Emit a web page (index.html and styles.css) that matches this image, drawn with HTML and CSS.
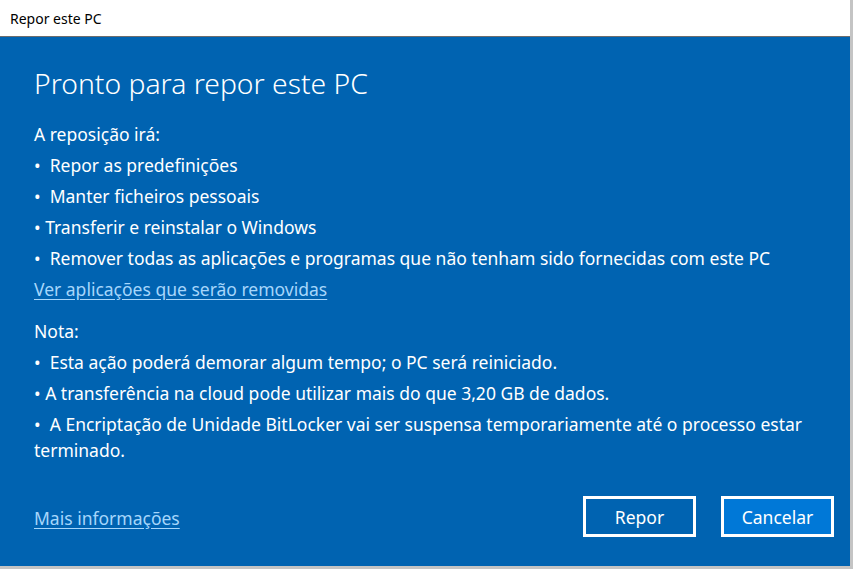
FILE: index.html
```html
<!DOCTYPE html>
<html lang="pt">
<head>
  <meta charset="UTF-8">
  <meta name="viewport" content="width=device-width, initial-scale=1.0">
  <title>Repor este PC</title>
  <link rel="stylesheet" href="styles.css">
</head>
<body>
  <div class="window">
    <div class="titlebar">Repor este PC</div>
    <div class="content">
      <h1>Pronto para repor este PC</h1>
      <p class="intro">A reposição irá:</p>
      <ul class="items">
        <li>•&nbsp; Repor as predefinições</li>
        <li>•&nbsp; Manter ficheiros pessoais</li>
        <li>• Transferir e reinstalar o Windows</li>
        <li>•&nbsp; Remover todas as aplicações e programas que não tenham sido fornecidas com este PC</li>
      </ul>
      <a class="link" href="#">Ver aplicações que serão removidas</a>
      <p class="intro note">Nota:</p>
      <ul class="items">
        <li>•&nbsp; Esta ação poderá demorar algum tempo; o PC será reiniciado.</li>
        <li>• A transferência na cloud pode utilizar mais do que 3,20 GB de dados.</li>
        <li>•&nbsp; A Encriptação de Unidade BitLocker vai ser suspensa temporariamente até o processo estar terminado.</li>
      </ul>
      <div class="footer">
        <a class="link more" href="#">Mais informações</a>
        <div class="buttons">
          <button class="btn">Repor</button>
          <button class="btn primary">Cancelar</button>
        </div>
      </div>
    </div>
  </div>
</body>
</html>
```

FILE: styles.css
```css
* {
  margin: 0;
  padding: 0;
  box-sizing: border-box;
}

body {
  font-family: 'Noto Sans', 'Open Sans', sans-serif;
  background-color: #c4c4c4;
  width: 853px;
  height: 569px;
  overflow: hidden;
}

.window {
  width: 850px;
  height: 566px;
  display: flex;
  flex-direction: column;
  background-color: #0063b1;
}

.titlebar {
  height: 37px;
  background-color: #fff;
  border-bottom: 1px solid #6d6d6d;
  color: #000;
  font-size: 14px;
  padding-left: 10px;
  display: flex;
  align-items: center;
}

.content {
  flex: 1;
  display: flex;
  flex-direction: column;
  padding: 24px 16px 29px 34px;
  color: #fff;
}

h1 {
  font-size: 28.3px;
  font-weight: 300;
  line-height: 44px;
  margin-bottom: 16px;
}

.intro {
  font-size: 17.5px;
  line-height: 26px;
  margin-bottom: 5px;
}

.note {
  margin-top: 16px;
}

.items {
  list-style: none;
  font-size: 17.5px;
  line-height: 26px;
}

.items li {
  margin-bottom: 5px;
  padding-right: 30px;
}

.link {
  color: #a6d6fb;
  font-size: 17.5px;
  line-height: 26px;
  text-decoration: underline;
  text-underline-offset: 3px;
  align-self: flex-start;
}

.footer {
  margin-top: auto;
  display: flex;
  align-items: center;
  justify-content: space-between;
}

.more {
  align-self: center;
  margin-top: 2px;
}

.buttons {
  display: flex;
  gap: 25px;
}

.btn {
  width: 113px;
  height: 41px;
  border: 3px solid #fff;
  background-color: #0063b1;
  color: #fff;
  font-family: inherit;
  font-size: 17.5px;
  cursor: pointer;
}

.btn.primary {
  background-color: #0078d7;
}
```
